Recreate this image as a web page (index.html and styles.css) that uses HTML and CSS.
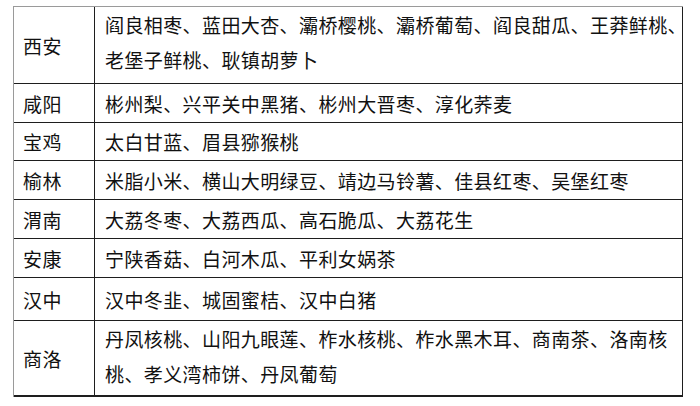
FILE: index.html
```html
<!DOCTYPE html>
<html lang="zh-CN">
<head>
<meta charset="utf-8">
<title>陕西特产</title>
<link rel="stylesheet" href="styles.css">
</head>
<body>
<div class="table">
  <div class="city r1">西安</div>
  <div class="items r1 multi">阎良相枣、蓝田大杏、灞桥樱桃、灞桥葡萄、阎良甜瓜、王莽鲜桃、<br>老堡子鲜桃、耿镇胡萝卜</div>

  <div class="city r2">咸阳</div>
  <div class="items r2">彬州梨、兴平关中黑猪、彬州大晋枣、淳化荞麦</div>

  <div class="city r3">宝鸡</div>
  <div class="items r3">太白甘蓝、眉县猕猴桃</div>

  <div class="city r4">榆林</div>
  <div class="items r4">米脂小米、横山大明绿豆、靖边马铃薯、佳县红枣、吴堡红枣</div>

  <div class="city r5">渭南</div>
  <div class="items r5">大荔冬枣、大荔西瓜、高石脆瓜、大荔花生</div>

  <div class="city r6">安康</div>
  <div class="items r6">宁陕香菇、白河木瓜、平利女娲茶</div>

  <div class="city r7">汉中</div>
  <div class="items r7">汉中冬韭、城固蜜桔、汉中白猪</div>

  <div class="city r8 last">商洛</div>
  <div class="items r8 last multi">丹凤核桃、山阳九眼莲、柞水核桃、柞水黑木耳、商南茶、洛南核<br>桃、孝义湾柿饼、丹凤葡萄</div>
</div>
</body>
</html>
```

FILE: styles.css
```css
html, body {
  margin: 0;
  padding: 0;
  background: #ffffff;
}

body {
  padding: 6px 0 0 13px;
  font-family: "Noto Sans CJK SC", "Noto Sans", sans-serif;
  color: #111111;
}

.table {
  display: grid;
  grid-template-columns: 81px 588px;
  grid-template-rows: 77px 39px 38px 39px 39px 39px 43px 76px;
  width: 670px;
  box-sizing: border-box;
  border-top: 1px solid #9a9a9a;
  border-left: 1px solid #9a9a9a;
}

.city,
.items {
  box-sizing: border-box;
  border-bottom: 1px solid #1e1e1e;
  border-right: 1px solid #1e1e1e;
  font-size: 19px;
  line-height: 35px;
  white-space: nowrap;
  display: flex;
  align-items: center;
}

.city {
  padding-left: 9px;
  letter-spacing: 0.4px;
}

.items {
  padding-left: 10px;
  letter-spacing: 0.4px;
}

.items.multi {
  align-items: flex-start;
  padding-top: 0;
}

.last {
  border-bottom: 2px solid #1e1e1e;
}
```
